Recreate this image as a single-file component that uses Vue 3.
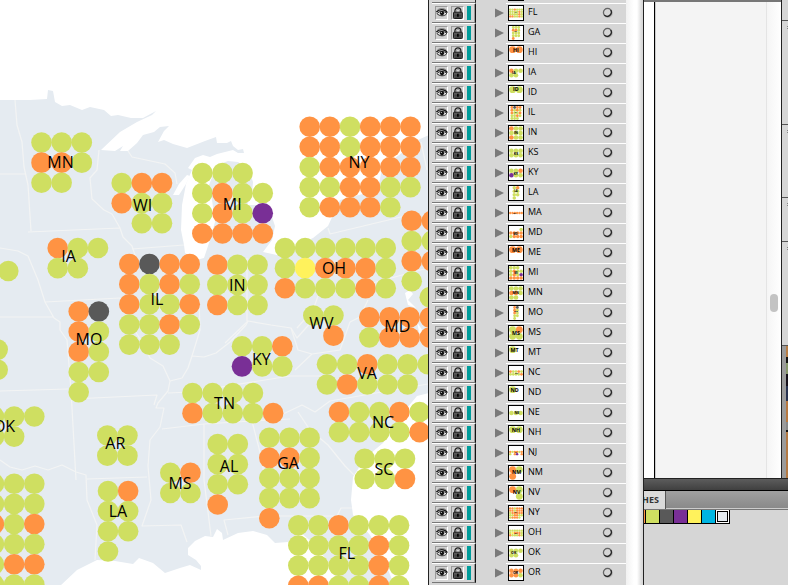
<script setup>
const colors = {
  G: '#cfdf61',
  O: '#ff9343',
  P: '#792f96',
  K: '#595959',
  Y: '#fff25c'
}
const pitch = 20.15

// Each cluster: position of its first dot, label centre and baseline, and rows of dot colours.
const clusters = [
  { code: 'MN', x: 41.5, y: 142.5, lx: 60.5, ly: 168, rows: ['GGG', 'OOG', 'GG'] },
  { code: 'WI', x: 121.7, y: 183, lx: 142.5, ly: 211, rows: ['GOO', 'OGG', '.GG'] },
  { code: 'IA', x: 57.7, y: 248, lx: 68.5, ly: 262, rows: ['OGG', 'GG'] },
  { code: 'MI', x: 202.3, y: 173, lx: 232.3, ly: 210, rows: ['GGG', 'GOGG', 'GOGP', 'OOOO'] },
  { code: 'NY', x: 309.7, y: 126.7, lx: 359, ly: 168, rows: ['OOGOOO', 'OOGOOO', 'GOOOOO', 'GGOOGG', 'GOOOG'] },
  { code: '', x: 411.7, y: 220.8, lx: 0, ly: 0, rows: ['OO', 'GG', 'OO', 'G'] },
  { code: 'MD', x: 369.3, y: 297.2, lx: 397.3, ly: 332, rows: ['...G', 'OOOO', 'GOOO'] },
  { code: 'VA', x: 327, y: 364.3, lx: 367, ly: 379, rows: ['GGOGGG', 'GOGGG'] },
  { code: 'NC', x: 339, y: 412, lx: 383, ly: 428, rows: ['OGGOG', 'GGGGO'] },
  { code: 'SC', x: 364.7, y: 458.7, lx: 384, ly: 475, rows: ['GGG', 'GGO'] },
  { code: 'GA', x: 269.3, y: 437.7, lx: 288, ly: 469, rows: ['GGG', 'OOG', 'GGG', 'GGG', 'O'] },
  { code: 'FL', x: 298.3, y: 525.3, lx: 346.7, ly: 559, rows: ['GGOGGG', 'GGGGOG', 'GGGGOG', 'OOGGOG'] },
  { code: 'OH', x: 285, y: 248, lx: 334, ly: 274, rows: ['GGGGGG', 'GYOOOG', 'OGGGOG'] },
  { code: 'IN', x: 217.3, y: 264.7, lx: 237.3, ly: 291, rows: ['OGG', 'GGG', 'OGG'] },
  { code: 'IL', x: 129.3, y: 264, lx: 157, ly: 305, rows: ['OKOO', 'OGOG', 'OGGO', 'GGOG', 'GGG'] },
  { code: 'MO', x: 78.7, y: 311.5, lx: 89, ly: 345, rows: ['OK', 'OG', 'OG', 'GG', 'G'] },
  { code: 'WV', x: 313.3, y: 315.5, lx: 321.5, ly: 329, rows: ['GG', '.O'] },
  { code: 'KY', x: 242, y: 346.2, lx: 261.3, ly: 365, rows: ['GGO', 'PGG'] },
  { code: 'TN', x: 192.5, y: 393, lx: 224.5, ly: 409, rows: ['GGGG', 'OGGGO'] },
  { code: 'AR', x: 107.3, y: 435.5, lx: 115.3, ly: 449, rows: ['GG', 'GG'] },
  { code: 'LA', x: 108, y: 491, lx: 118, ly: 517, rows: ['GO', 'GG', 'GG', 'G'] },
  { code: 'MS', x: 170.3, y: 472.8, lx: 180, ly: 489, rows: ['GO', 'GG'] },
  { code: 'AL', x: 217.7, y: 444, lx: 229, ly: 472, rows: ['GG', 'GG', 'GG', 'O'] },
  { code: 'OK', x: -6, y: 416.5, lx: 4, ly: 432, rows: ['GGG', 'GG'] },
  { code: '', x: -6, y: 483.7, lx: 0, ly: 0, rows: ['GGG', 'GGG', 'OGO', 'GGG', 'GOO', 'GGG'] },
  { code: '', x: 8.3, y: 271, lx: 0, ly: 0, rows: ['G'] },
  { code: '', x: -2.3, y: 349.6, lx: 0, ly: 0, rows: ['G', 'G'] }
]

function offMap(code, rows, lx, ly) {
  return { code, rows, x: 10, y: 10, lx, ly }
}

const otherStates = [
  offMap('HI', ['OO'], 20, 17),
  offMap('ID', ['GG'], 20, 15),
  offMap('KS', ['GGG', 'GGG'], 30, 28),
  offMap('MA', ['OOOOOO'], 50, 16),
  offMap('ME', ['OO'], 20, 16),
  offMap('MT', ['G'], 16, 16),
  offMap('ND', ['G'], 16, 16),
  offMap('NE', ['GGG'], 34, 16),
  offMap('NH', ['GG'], 20, 16),
  offMap('NJ', ['OGOOGO', 'G.OP.O'], 60, 18),
  offMap('NM', ['OG', 'O'], 22, 22),
  offMap('NV', ['OG', '.G'], 22, 22),
  offMap('OR', ['OOO', 'OOG'], 28, 26)
]

const order = 'FL GA HI IA ID IL IN KS KY LA MA MD ME MI MN MO MS MT NC ND NE NH NJ NM NV NY OH OK OR'.split(' ')

function dotsOf(c) {
  const out = []
  c.rows.forEach((row, r) => {
    row.split('').forEach((k, i) => {
      if (colors[k]) out.push({ cx: c.x + i * pitch, cy: c.y + r * pitch, fill: colors[k] })
    })
  })
  return out
}

const mapClusters = clusters.map(c => ({ ...c, dots: dotsOf(c) }))

const layers = order.map(code => {
  const c = [...clusters, ...otherStates].find(s => s.code === code)
  const cols = Math.max(...c.rows.map(r => r.length))
  const size = Math.max(cols, c.rows.length, 2) * pitch
  const top = cols > 2 ? (size - c.rows.length * pitch) / 2 : 0
  const left = cols > 1 ? (size - cols * pitch) / 2 : 0
  return {
    ...c,
    dots: dotsOf(c),
    box: [c.x - 11 - left, c.y - 11 - top, size + 2, size + 2].join(' ')
  }
})

const swatches = ['#cfdf61', '#595959', '#792f96', '#fff25c', '#00b5e2']
</script>

<template>
  <div class="app">
    <main class="canvas">
      <svg class="map" viewBox="0 0 428 585" preserveAspectRatio="xMinYMin slice" role="img" aria-label="Map of states">
        <path class="land" d="M0 100 L30 100 L47 99 L48 90 L53 91 L55 102 L62 106 L70 105 L82 110 L90 107 L104 110 L111 116 L118 115 L131 118 L143 118 L156 111 L152 115 L137 122 L120 132 L101 150 L115 151 L123 146 L120 151 L128 151 L137 143 L143 135 L154 132 L160 127 L169 126 L164 131 L158 142 L164 140 L173 144 L187 148 L205 141 L216 137 L217 143 L227 143 L231 141 L233 146 L238 150 L243 149 L244 153 L238 153 L233 150 L217 154 L210 157 L203 155 L195 158 L188 168 L192 170 L186 184 L182 205 L181 230 L184 245 L185 253 L196 260 L204 258 L210 240 L215 222 L212 200 L209 185 L217 165 L228 161 L238 162 L249 170 L253 182 L252 194 L247 205 L258 205 L269 208 L275 226 L272 240 L263 252 L277 255 L313 238 L328 226 L340 200 L378 190 L382 168 L420 139 L429 135 L429 393 L417 396 L407 408 L383 443 L365 458 L353 477 L351 500 L353 515 L370 535 L383 558 L391 577 L393 586 L338 586 L333 568 L315 545 L300 532 L288 542 L275 543 L267 535 L253 531 L238 533 L223 540 L222 533 L217 529 L213 537 L205 536 L195 541 L188 548 L188 555 L196 560 L201 566 L201 570 L190 565 L180 568 L165 573 L153 563 L139 558 L133 564 L115 561 L97 560 L77 570 L60 586 L0 586 Z" />
        <g class="water">
          <path d="M190 176 L186 184 L179 195 L173 195 L179 184 L187 175 Z" />
          <path d="M405 293 L410 290 L413 294 L408 300 L416 308 L408 305 Z" />
          <path d="M417 322 L424 333 L428 324 L428 337 L420 337 Z" />
        </g>
        <g class="borders">
          <path d="M15 100 L17 125 L22 142 L24 167 L28 185 L31 231 M0 174 L25 174 M28 232 L120 228 L123 237 L132 246 L136 258" />
          <path d="M99 150 L97 170 L90 178 L92 199 L104 210 L112 214 L120 228 M128 151 L132 157 L165 164 L175 173 L177 184 M132 249 L184 245" />
          <path d="M0 248 L18 251 L28 256 L38 280 L45 302 L54 318 L60 322 L60 330 L67 340 L71 390 L76 480 M45 302 L120 298 M0 317 L53 317 M0 391 L68 389" />
          <path d="M120 298 L128 320 L142 342 L150 358 L163 366 L170 381 L168 391 L158 403 L156 408 L164 408 L160 427 L150 440 L148 466 L151 500 L142 526 L181 525 L187 542 M72 399 L157 395 L154 405" />
          <path d="M170 381 L182 378 L188 368 L192 356 L204 357 L216 353 L230 342 L246 325 L248 321 L271 325 L291 328 L297 338 L313 320" />
          <path d="M199 300 L200 330 L192 356 M247 258 L247 321 M168 393 L190 392 L290 376 L328 376 M248 321 L225 343" />
          <path d="M162 429 L204 424 L252 421 L290 419 M204 424 L204 480 L211 536 M252 421 L262 460 L267 500 L265 516 L224 520 L228 535" />
          <path d="M281 415 L302 405 L315 412 L330 401 L428 384 M298 412 L310 430 L328 445 L345 466 L354 475 M268 516 L337 516 L341 508 L352 508" />
          <path d="M291 328 L298 350 L312 354 L340 350 L350 322 L360 317 L368 300 M318 296 L313 310 L297 328 M312 354 L295 370" />
          <path d="M328 228 L330 234 L405 216 M369 284 L428 268 M0 460 L10 467 L22 470 L35 466 L48 470 L62 465 L76 472 L86 475 L87 500 L97 525 L95 560 M87 479 L147 477 M421 142 L427 170" />
        </g>
        <g v-for="(c, i) in mapClusters" :key="i">
          <circle v-for="(d, j) in c.dots" :key="j" :cx="d.cx" :cy="d.cy" r="10.3" :fill="d.fill" />
        </g>
        <g class="names">
          <text v-for="(c, i) in mapClusters.filter(m => m.code)" :key="i" :x="c.lx" :y="c.ly">{{ c.code }}</text>
        </g>
      </svg>
    </main>

    <section class="layers" aria-label="Layers">
      <div class="toprow">
        <span class="toprow-cells"></span>
        <span class="toprow-line"><i></i></span>
      </div>
      <ul>
        <li v-for="l in layers" :key="l.code">
          <div class="cells">
            <button class="well" :aria-label="'Toggle visibility of ' + l.code">
              <svg viewBox="0 0 12 12">
                <path d="M0.5 5 C2.5 2.2 8.5 1.4 11.4 5.6" fill="none" stroke="#111" stroke-width="1.3" />
                <path d="M1 6.6 C3 3.8 8.5 3.8 10.8 6.6 C8.5 9.6 3.6 9.4 1 6.6 Z" fill="#eee" stroke="#111" stroke-width="0.9" />
                <circle cx="6" cy="6.2" r="2.1" fill="#111" />
                <circle cx="5.4" cy="5.5" r="0.6" fill="#ccc" />
                <path d="M1.5 2.7 L4 1.6 L8 1.7 L10.4 3.2" fill="none" stroke="#777" stroke-width="0.8" />
              </svg>
            </button>
            <button class="well" :aria-label="'Toggle lock of ' + l.code">
              <svg viewBox="0 0 12 12">
                <path d="M2.9 6 V4.2 C2.9 -0.2 8.9 -0.2 8.9 4.2 V6" fill="none" stroke="#222" stroke-width="1.3" />
                <path d="M4.1 5.4 V4.4 C4.1 1.6 7.7 1.6 7.7 4.4 V5.4" fill="none" stroke="#888" stroke-width="0.8" />
                <rect x="1.5" y="5.2" width="8.8" height="6.3" rx="0.8" fill="#5a5a5a" stroke="#1c1c1c" stroke-width="1" />
                <path d="M2.6 8.2 H9.2 M2.6 10.1 H9.2" stroke="#333" stroke-width="0.9" />
                <path d="M5.9 6.8 V9.8" stroke="#000" stroke-width="1.6" />
              </svg>
            </button>
            <span class="tint"></span>
          </div>
          <button class="expand" :aria-label="'Expand ' + l.code">
            <svg viewBox="0 0 9 10"><path d="M0 0.5 L9 5 L0 9.5 Z" fill="#7a7a7a" /></svg>
          </button>
          <div class="entry">
            <svg class="thumb" :viewBox="l.box">
              <circle v-for="(d, j) in l.dots" :key="j" :cx="d.cx" :cy="d.cy" r="10.3" :fill="d.fill" />
              <text :x="l.lx" :y="l.ly">{{ l.code }}</text>
            </svg>
            <span class="name">{{ l.code }}</span>
            <button class="target" :aria-label="'Target ' + l.code">
              <svg viewBox="0 0 11 11">
                <circle cx="5.9" cy="6" r="4.4" fill="none" stroke="#bbb" stroke-width="1.4" />
                <circle cx="5.5" cy="5.5" r="4.1" fill="none" stroke="#666" stroke-width="1.2" />
                <path d="M8.7 3 A4.1 4.1 0 0 1 2.4 8.1" fill="none" stroke="#222" stroke-width="1.2" />
              </svg>
            </button>
          </div>
        </li>
      </ul>
    </section>

    <div class="gutter"></div>

    <section class="side">
      <div class="upper">
        <div class="document">
          <div class="page"></div>
          <div class="track"><span class="thumbbar"></span></div>
        </div>
        <div class="dock">
          <span class="dock-a"></span>
          <span class="dock-b dots"></span>
          <span class="dock-c dots"></span>
          <span class="dock-d dots"></span>
          <span class="dock-b dots"></span>
          <span class="photo"></span>
        </div>
      </div>
      <div class="divider"></div>
      <div class="tabs"><button class="tab"><span>SWATCHES</span></button></div>
      <div class="swatches">
        <button class="swatch cut" aria-label="Orange"></button>
        <button v-for="s in swatches" :key="s" class="swatch" :style="{ backgroundColor: s }" :aria-label="s"></button>
        <button class="swatch selected" aria-label="Selected"></button>
      </div>
    </section>
  </div>
</template>

<style>
body {
  margin: 0;
  background: #fff;
}
</style>

<style scoped>
* {
  box-sizing: border-box;
}
button {
  margin: 0;
  padding: 0;
  border: 0;
  background: none;
}
svg {
  display: block;
}
.app {
  display: grid;
  grid-template-columns: minmax(0, 428fr) 198px 17px minmax(0, 145fr);
  height: 100vh;
  overflow: hidden;
  font-family: "Open Sans", "Noto Sans", sans-serif;
}
.canvas {
  min-height: 0;
  overflow: hidden;
}
.map {
  width: 100%;
  height: 100%;
}
.land {
  fill: #e5ebf1;
}
.water {
  fill: #fff;
}
.borders {
  fill: none;
  stroke: #f3f4f4;
  stroke-width: 1.2;
  stroke-linejoin: round;
}
.names {
  font-size: 16px;
  font-weight: 500;
  text-anchor: middle;
}

.layers {
  overflow: hidden;
  background: #d6d6d6;
  border-left: 1px solid #222;
  padding-left: 3px;
}
.toprow {
  display: flex;
  height: 3px;
}
.toprow-cells {
  width: 44px;
  border-right: 1px solid #222;
  border-bottom: 1px solid #777;
}
.toprow-line {
  padding-left: 32px;
}
.toprow-line i {
  display: block;
  width: 16px;
  height: 1px;
  background: #000;
}
ul {
  margin: 0;
  padding: 0;
  list-style: none;
}
li {
  display: flex;
  height: 20px;
}
.cells {
  display: flex;
  align-items: flex-start;
  gap: 3px;
  width: 44px;
  padding: 2px 0 0 3px;
  border-top: 1px solid #fff;
  border-bottom: 1px solid #777;
  border-right: 1px solid #111;
  box-shadow: inset -1px 0 #999;
}
.well {
  display: flex;
  align-items: center;
  justify-content: center;
  width: 13px;
  height: 14px;
  border: 1px solid #999;
  border-right-color: #fff;
  border-bottom-color: #fff;
  background: #d0d0d0;
}
.well svg {
  flex: none;
  width: 12px;
  height: 12px;
}
.tint {
  width: 4px;
  height: 14px;
  background: #009c9a;
}
.expand {
  display: flex;
  align-items: center;
  width: 30px;
  padding-left: 19px;
}
.expand svg {
  flex: none;
  width: 9px;
  height: 10px;
}
.entry {
  display: flex;
  flex: 1;
  align-items: flex-start;
  min-width: 0;
  border-top: 1px solid #fff;
  padding: 1px 13px 0 2px;
}
.thumb {
  width: 16px;
  height: 16px;
  border: 1px solid #000;
  background: #fff;
  font-size: 16px;
  font-weight: 700;
  text-anchor: middle;
}
.name {
  flex: 1;
  padding-left: 4px;
  color: #000;
  font-size: 9px;
  font-weight: 500;
  line-height: 14px;
}
.target {
  width: 11px;
  height: 11px;
  margin-top: 2px;
}

.gutter {
  background: linear-gradient(90deg, #f1f1f1, #fff 8px, #fff 11px, #d8d8d8 16px);
}
.side {
  display: flex;
  flex-direction: column;
  min-height: 0;
  border-left: 1px solid #222;
  background: #d6d6d6;
}
.upper {
  display: flex;
  flex: 478;
  min-height: 0;
}
.document {
  display: flex;
  flex: 1;
  padding-left: 10px;
  border-top: 2px solid #777;
  background: #fff;
}
.page {
  flex: 1;
  border-left: 1px solid #000;
  border-right: 1px solid #e4e4e4;
  background: #f4f4f4;
  box-shadow: inset 1px 0 #ccc;
}
.track {
  display: flex;
  width: 14px;
  padding: 292px 3px 0;
  background: linear-gradient(90deg, #f5f5f5, #fff);
}
.thumbbar {
  width: 8px;
  height: 18px;
  border-radius: 4px;
  background: #c3c3c3;
}
.dock {
  display: flex;
  flex-direction: column;
  width: 7px;
  border-left: 1px solid #222;
}
.dock span {
  border-bottom: 1px solid #555;
}
.dock-a {
  height: 21px;
}
.dock-b {
  height: 104px;
}
.dock-c {
  height: 73px;
}
.dock-d {
  height: 44px;
}
.dots {
  background: linear-gradient(#888, #888) 5px 5px / 1px 1px no-repeat, linear-gradient(#888, #888) 5px 7px / 1px 1px no-repeat;
}
.dock .photo {
  flex: 1;
  border-left: 4px solid #9b9b9b;
  border-bottom: 0;
  background: linear-gradient(#b87e45 0 11px, #111 11px 17px, #87976b 17px 28px, #16101a 28px 40px, #273250 40px 55px, #b87940 55px 76px, #888 76px 84px, #111 84px 86px, #b47a43 86px);
}
.divider {
  height: 13px;
  border-top: 1px solid #222;
  border-bottom: 1px solid #000;
  background: linear-gradient(#5c5c5c, #404040);
}
.tabs {
  display: flex;
  height: 19px;
  border-bottom: 1px solid #777;
  box-shadow: inset 0 -1px #ccc;
  background: linear-gradient(#a0a0a0, #888);
}
.tab {
  display: flex;
  justify-content: flex-end;
  width: 22px;
  padding-right: 6px;
  overflow: hidden;
  border-right: 1px solid #555;
  background: #dadada;
  color: #333;
  font: 700 9px/18px "Open Sans", sans-serif;
}
.swatches {
  display: flex;
  flex: 75;
  align-items: flex-start;
}
.swatch {
  width: 14px;
  height: 14px;
  border: solid #000;
  border-width: 0 1px 1px 0;
}
.swatch.cut {
  width: 2px;
  background: #ff9343;
}
.swatch.selected {
  border: 1px solid #000;
  border-width: 0 1px 1px 0;
  background: #e5ebf1;
  box-shadow: inset 0 0 0 1px #fff, inset 0 0 0 2px #000;
}
</style>
